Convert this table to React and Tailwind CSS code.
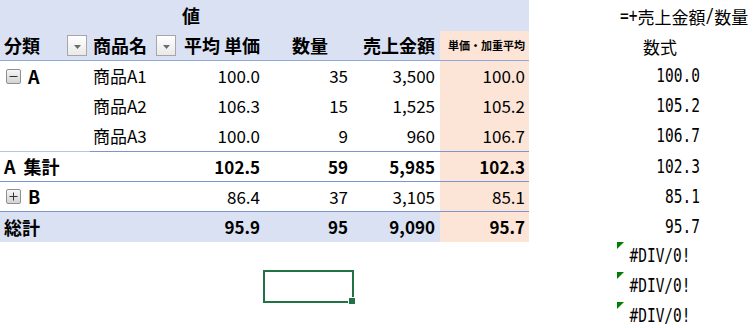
const jp = "font-['Noto_Sans_CJK_JP',sans-serif]";
const mono = "inline-block scale-y-[1.3] font-['DejaVu_Sans_Mono',monospace] text-[14.5px]";
const cols = "grid grid-cols-[90px_90px_83px_89px_88px_89px]";

function Dropdown() {
  return (
    <div className="flex h-[21px] w-[20px] items-end justify-center border border-[#a6a6a6] bg-gradient-to-b from-white to-[#e9e9e9] pb-[6px]">
      <svg width="7" height="4" viewBox="0 0 7 4">
        <path d="M0 0h7L3.5 4z" fill="#6b6b6b" />
      </svg>
    </div>
  );
}

function ToggleBox({ plus }) {
  return (
    <div className="flex h-[15px] w-[15px] items-center justify-center rounded-[2px] border border-[#8f8f8f] bg-gradient-to-b from-[#f6f6f6] to-[#d4d4d4]">
      <svg width="11" height="11" viewBox="0 0 11 11">
        <path d="M1.5 5.5h8" stroke="#333" strokeWidth="1" />
        {plus && <path d="M5.5 1.5v8" stroke="#333" strokeWidth="1" />}
      </svg>
    </div>
  );
}

const rows = [
  { label: 'A', toggle: 'minus', name: '商品A1', avg: '100.0', qty: '35', sales: '3,500', w: '100.0' },
  { name: '商品A2', avg: '106.3', qty: '15', sales: '1,525', w: '105.2' },
  { name: '商品A3', avg: '100.0', qty: '9', sales: '960', w: '106.7', last: true },
];

function NumCells({ avg, qty, sales, w, bold, bg = '', line = '' }) {
  const weight = bold ? 'font-bold' : '';
  return (
    <>
      <div className={`flex items-center justify-end pr-[3px] ${bg} ${line}`}><span className={weight}>{avg}</span></div>
      <div className={`flex items-center justify-end pr-[4px] ${bg} ${line}`}><span className={weight}>{qty}</span></div>
      <div className={`flex items-center justify-end pr-[5px] ${bg} ${line}`}><span className={weight}>{sales}</span></div>
      <div className={`flex items-center justify-end bg-[#fce4d6] pr-[4px] ${line}`}><span className={weight}>{w}</span></div>
    </>
  );
}

function PivotTable() {
  return (
    <div className={`w-[529px] text-[17px] text-black ${jp}`}>
      <div className={`${cols} h-[31px] bg-[#d9e1f2]`}>
        <div />
        <div />
        <div className="flex items-center pl-[2px] text-[18px] font-bold">値</div>
      </div>

      <div className={`${cols} h-[30px] border-b border-[#8ea9db] text-[18px] font-bold`}>
        <div className="flex items-center justify-between bg-[#d9e1f2] pl-[4px] pr-[3px]">
          <span>分類</span>
          <Dropdown />
        </div>
        <div className="flex items-center justify-between bg-[#d9e1f2] pl-[3px] pr-[4px]">
          <span>商品名</span>
          <Dropdown />
        </div>
        <div className="flex items-center justify-end bg-[#d9e1f2] pr-[3px]">平均 単価</div>
        <div className="flex items-center justify-end bg-[#d9e1f2] pr-[24px]">数量</div>
        <div className="flex items-center justify-end bg-[#d9e1f2] pr-[5px]">売上金額</div>
        <div className="flex items-center justify-end bg-[#fce4d6] pr-[4px] text-[11px]">単価・加重平均</div>
      </div>

      {rows.map((r) => (
        <div key={r.name} className={`${cols} ${r.last ? 'h-[31px]' : 'h-[30px]'}`}>
          <div className={`flex items-center gap-[7px] pl-[6px] ${r.last ? 'border-b border-[#b4c6e7]' : ''}`}>
            {r.toggle && <ToggleBox />}
            {r.label && <span className="font-bold text-[18px]">{r.label}</span>}
          </div>
          <div className={`flex items-center pl-[3px] ${r.last ? 'border-b border-[#7b96cf]' : ''}`}>{r.name}</div>
          <NumCells {...r} line={r.last ? 'border-b border-[#7b96cf]' : ''} />
        </div>
      ))}

      <div className={`${cols} h-[30px] border-b border-[#7b96cf]`}>
        <div className="col-span-2 flex items-center gap-[8px] pl-[4px] text-[18px] font-bold">
          <span>A</span>
          <span>集計</span>
        </div>
        <NumCells avg="102.5" qty="59" sales="5,985" w="102.3" bold />
      </div>

      <div className={`${cols} h-[30px] border-b border-[#7b96cf]`}>
        <div className="col-span-2 flex items-center gap-[7px] pl-[6px]">
          <ToggleBox plus />
          <span className="text-[18px] font-bold">B</span>
        </div>
        <NumCells avg="86.4" qty="37" sales="3,105" w="85.1" />
      </div>

      <div className={`${cols} h-[30px]`}>
        <div className="col-span-2 flex items-center bg-[#d9e1f2] pl-[4px] text-[18px] font-bold">総計</div>
        <NumCells avg="95.9" qty="95" sales="9,090" w="95.7" bold bg="bg-[#d9e1f2]" />
      </div>
    </div>
  );
}

function ErrorCell() {
  return (
    <div className="relative flex h-[30px] items-center justify-center">
      <svg className="absolute left-0 top-0" width="7" height="7" viewBox="0 0 7 7">
        <path d="M0 0h7L0 7z" fill="#008000" />
      </svg>
      <span className={mono}>#DIV/0!</span>
    </div>
  );
}

function FormulaColumn() {
  const values = ['100.0', '105.2', '106.7', '102.3', '85.1', '95.7'];
  return (
    <div className={`ml-[88px] w-[86px] text-[17px] text-black ${jp}`}>
      <div className="flex h-[31px] items-center whitespace-nowrap pl-[3px] pt-[3px]">
        <span className={mono}>=+</span>
        <span>売上金額</span>
        <span className={mono}>/</span>
        <span>数量</span>
      </div>
      <div className="flex h-[30px] items-center justify-center pt-[2px]">数式</div>
      {values.map((v, i) => (
        <div key={i} className={`flex items-center justify-end pr-[3px] pt-[2px] ${i === 3 ? 'h-[31px]' : 'h-[30px]'}`}>
          <span className={mono}>{v}</span>
        </div>
      ))}
      <ErrorCell />
      <ErrorCell />
      <ErrorCell />
    </div>
  );
}

export default function App() {
  return (
    <div className="flex h-[328px] w-[754px] overflow-hidden bg-white">
      <div className="flex flex-col">
        <PivotTable />
        <div className="relative ml-[263px] mt-[28px] h-[33px] w-[91px] border-2 border-[#217346]">
          <div className="absolute bottom-[-4px] right-[-4px] h-[8px] w-[8px] border border-white bg-[#217346]" />
        </div>
      </div>
      <FormulaColumn />
    </div>
  );
}
